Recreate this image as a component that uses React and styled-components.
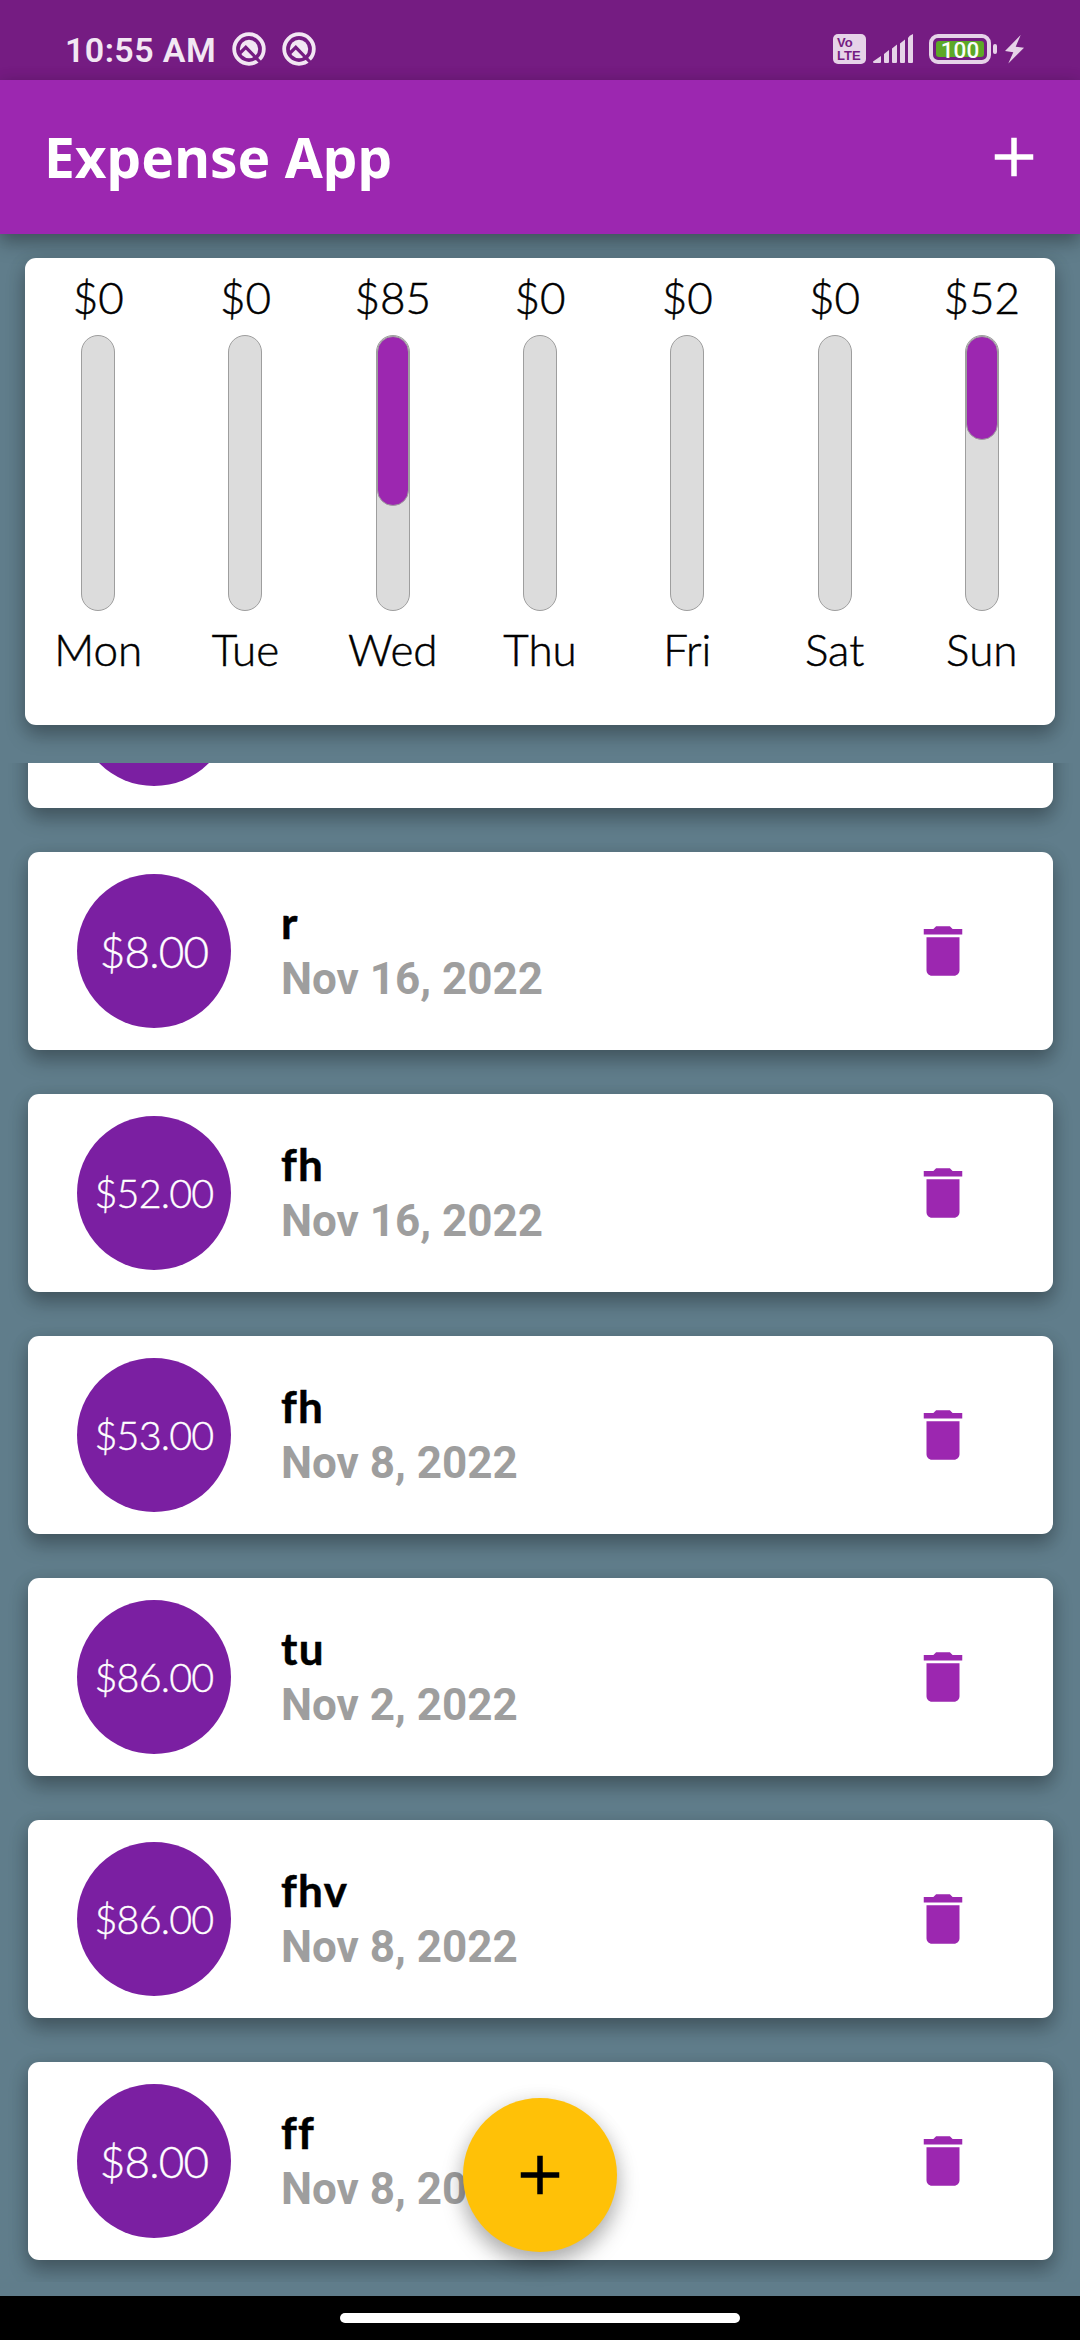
import React from "react";
import styled, { createGlobalStyle } from "styled-components";
import { MdAdd, MdDelete } from "react-icons/md";

const week = [
  { day: "Mon", amount: "$0", share: 0 },
  { day: "Tue", amount: "$0", share: 0 },
  { day: "Wed", amount: "$85", share: 85 / 137 },
  { day: "Thu", amount: "$0", share: 0 },
  { day: "Fri", amount: "$0", share: 0 },
  { day: "Sat", amount: "$0", share: 0 },
  { day: "Sun", amount: "$52", share: 52 / 137 },
];

const expenses = [
  { amount: "", title: "", date: "" },
  { amount: "$8.00", title: "r", date: "Nov 16, 2022" },
  { amount: "$52.00", title: "fh", date: "Nov 16, 2022" },
  { amount: "$53.00", title: "fh", date: "Nov 8, 2022" },
  { amount: "$86.00", title: "tu", date: "Nov 2, 2022" },
  { amount: "$86.00", title: "fhv", date: "Nov 8, 2022" },
  { amount: "$8.00", title: "ff", date: "Nov 8, 2022" },
];

const GlobalStyle = createGlobalStyle`
  * { box-sizing: border-box; }
  body { margin: 0; background: #607d8b; }
`;

const Screen = styled.div`
  position: relative;
  display: flex;
  flex-direction: column;
  width: 1080px;
  height: 2340px;
  overflow: hidden;
  background: #607d8b;
  font-family: Lato, "Open Sans", sans-serif;
`;

const StatusBar = styled.div`
  display: flex;
  align-items: center;
  height: 80px;
  padding: 18px 56px 0 65px;
  background: #751c82;
  color: #f2e7f3;
  flex: none;
`;

const Clock = styled.span`
  padding-top: 1px;
  font: 600 34px/40px Roboto, sans-serif;
  letter-spacing: 0.4px;
  width: 167px;
  white-space: nowrap;
`;

const Notices = styled.div`
  display: flex;
  gap: 16px;
  flex: 1;
`;

const VolteBadge = styled.div`
  display: flex;
  flex-direction: column;
  justify-content: center;
  width: 33px;
  height: 30px;
  padding-left: 4px;
  border-radius: 5px;
  background: #e6d3e8;
  color: #751c82;
  font: 700 13px/13px "Liberation Sans", sans-serif;
`;

const Signal = styled.svg`
  margin-left: 7px;
`;

const Battery = styled.div`
  width: 62px;
  height: 30px;
  margin-left: 16px;
  padding: 3px;
  border: 4px solid #e6d3e8;
  border-radius: 9px;
`;

const BatteryLevel = styled.div`
  display: flex;
  align-items: center;
  justify-content: center;
  height: 16px;
  border-radius: 3px;
  background: #5da827;
  color: #fbfdf9;
  font: 500 22.5px/16px Roboto, sans-serif;
  padding-top: 2px;
`;

const BatteryTip = styled.div`
  width: 4px;
  height: 10px;
  margin: 0 8px 0 2px;
  border-radius: 2px;
  background: #e6d3e8;
`;

const AppBar = styled.header`
  display: flex;
  align-items: center;
  justify-content: space-between;
  flex: none;
  height: 154px;
  padding: 0 33px 0 44px;
  background: #9c27b0;
  color: #fff;
  box-shadow: 0 9px 18px rgba(0, 0, 0, 0.28), 0 1px 16px rgba(0, 0, 0, 0.12);
`;

const AppTitle = styled.h1`
  margin: 0;
  font: 700 55px/76px "Noto Sans", sans-serif;
`;

const cardShadow = "0 11px 19px rgba(0, 0, 0, 0.26), 0 3px 18px rgba(0, 0, 0, 0.12)";

const ChartCard = styled.section`
  display: flex;
  flex: none;
  height: 466.5px;
  margin: 24.3px 24.6px 38.2px;
  padding-top: 12px;
  border-radius: 11px;
  background: #fff;
  box-shadow: ${cardShadow};
`;

const DayColumn = styled.div`
  display: flex;
  flex: 1 1 0;
  flex-direction: column;
  align-items: center;
`;

const ChartLabel = styled.span`
  font-size: 44px;
  font-weight: 300;
  line-height: 55px;
  color: #000;
  -webkit-text-stroke: 0.5px #000;
`;

const BarTrack = styled.div`
  width: 34px;
  height: 276px;
  margin: 9.5px 0 11px;
  border: 1px solid #9e9e9e;
  border-radius: 17px;
  background: #dcdcdc;
`;

const BarFill = styled.div`
  border: 1px solid #9e9e9e;
  border-radius: 16px;
  background: #9c27b0;
`;

const List = styled.main`
  flex: none;
  height: 1519px;
  overflow: hidden;
`;

const ListContent = styled.div`
  display: flex;
  flex-direction: column;
  gap: 44px;
  margin-top: -153px;
  padding: 0 27.5px;
`;

const ExpenseCard = styled.article`
  display: flex;
  align-items: center;
  flex: none;
  height: 198px;
  padding: 0 77px 0 49.5px;
  border-radius: 11px;
  background: #fff;
  box-shadow: ${cardShadow};
`;

const Amount = styled.div`
  display: flex;
  align-items: center;
  justify-content: center;
  width: 154px;
  height: 154px;
  border-radius: 50%;
  background: #7b1fa2;
  color: #fff;
  font-size: ${(p) => (p.$long ? 39.5 : 44)}px;
  font-weight: 300;
  line-height: 60px;
  letter-spacing: -0.8px;
  -webkit-text-stroke: 0.4px #fff;
`;

const Details = styled.div`
  display: flex;
  flex: 1;
  flex-direction: column;
  margin-left: 50px;
`;

const Title = styled.span`
  font-size: 44px;
  font-weight: 700;
  line-height: 55px;
  color: #000;
  font-variant-ligatures: none;
  letter-spacing: 1.3px;
  -webkit-text-stroke: 0.5px #000;
`;

const DateText = styled.span`
  margin-top: 2px;
  font: 700 44px/55px Roboto, sans-serif;
  color: #9e9e9e;
`;

const TrashIcon = styled(MdDelete)`
  width: 66px;
  height: 66px;
  color: #9c27b0;
`;

const AddButton = styled.button`
  position: absolute;
  left: 463px;
  top: 2098px;
  display: flex;
  align-items: center;
  justify-content: center;
  width: 154px;
  height: 154px;
  padding: 0;
  border: 0;
  border-radius: 50%;
  background: #ffc107;
  color: #000;
  box-shadow: 0 12px 22px rgba(0, 0, 0, 0.26), 0 3px 20px rgba(0, 0, 0, 0.12);
`;

const NavBar = styled.footer`
  display: flex;
  justify-content: center;
  flex: none;
  height: 44px;
  margin-top: 14px;
  padding-top: 17px;
  background: #000;
`;

const NavHandle = styled.div`
  width: 400px;
  height: 10px;
  border-radius: 5px;
  background: #fff;
`;

const NoticeIcon = () => (
  <svg width="34" height="34" viewBox="0 0 34 34" fill="none">
    <circle cx="17" cy="17" r="14.8" stroke="#f2e7f3" strokeWidth="3.8" />
    <circle cx="17" cy="17" r="9.2" fill="#f2e7f3" />
    <path d="M6.5 22.5 13.8 15.3 29.5 31.5" stroke="#751c82" strokeWidth="3.2" />
  </svg>
);

export default function App() {
  return (
    <Screen>
      <GlobalStyle />
      <StatusBar>
        <Clock>10:55 AM</Clock>
        <Notices>
          <NoticeIcon />
          <NoticeIcon />
        </Notices>
        <VolteBadge>
          <span>Vo</span>
          <span>LTE</span>
        </VolteBadge>
        <Signal width="40" height="30" viewBox="0 0 40 30" fill="#e6d3e8">
          <path d="M0 27.5 8 22v6q0 1-1 1H1Q0 29 0 27.5ZM11 20l5-4v12q0 1-1 1h-3q-1 0-1-1ZM19 14.5l5-4V28q0 1-1 1h-3q-1 0-1-1ZM27 9.5l5-4V28q0 1-1 1h-3q-1 0-1-1ZM35 4q1-2.5 5-4v28q0 1-1 1h-3q-1 0-1-1Z" />
        </Signal>
        <Battery>
          <BatteryLevel>100</BatteryLevel>
        </Battery>
        <BatteryTip />
        <svg width="19" height="29" viewBox="0 0 19 29" fill="#e6d3e8">
          <path d="M15.7 0 0 16l8.3 1.3L3.3 28.5 19 12.8l-8.3-1.1Z" />
        </svg>
      </StatusBar>
      <AppBar>
        <AppTitle>Expense App</AppTitle>
        <MdAdd size={66} />
      </AppBar>
      <ChartCard>
        {week.map((d) => (
          <DayColumn key={d.day}>
            <ChartLabel>{d.amount}</ChartLabel>
            <BarTrack>{d.share > 0 && <BarFill style={{ height: `${d.share * 100}%` }} />}</BarTrack>
            <ChartLabel>{d.day}</ChartLabel>
          </DayColumn>
        ))}
      </ChartCard>
      <List>
        <ListContent>
          {expenses.map((e, i) => (
            <ExpenseCard key={i}>
              <Amount $long={e.amount.length > 5}>{e.amount}</Amount>
              <Details>
                <Title>{e.title}</Title>
                <DateText>{e.date}</DateText>
              </Details>
              {e.title && <TrashIcon />}
            </ExpenseCard>
          ))}
        </ListContent>
      </List>
      <AddButton aria-label="Add expense">
        <MdAdd size={66} />
      </AddButton>
      <NavBar>
        <NavHandle />
      </NavBar>
    </Screen>
  );
}
